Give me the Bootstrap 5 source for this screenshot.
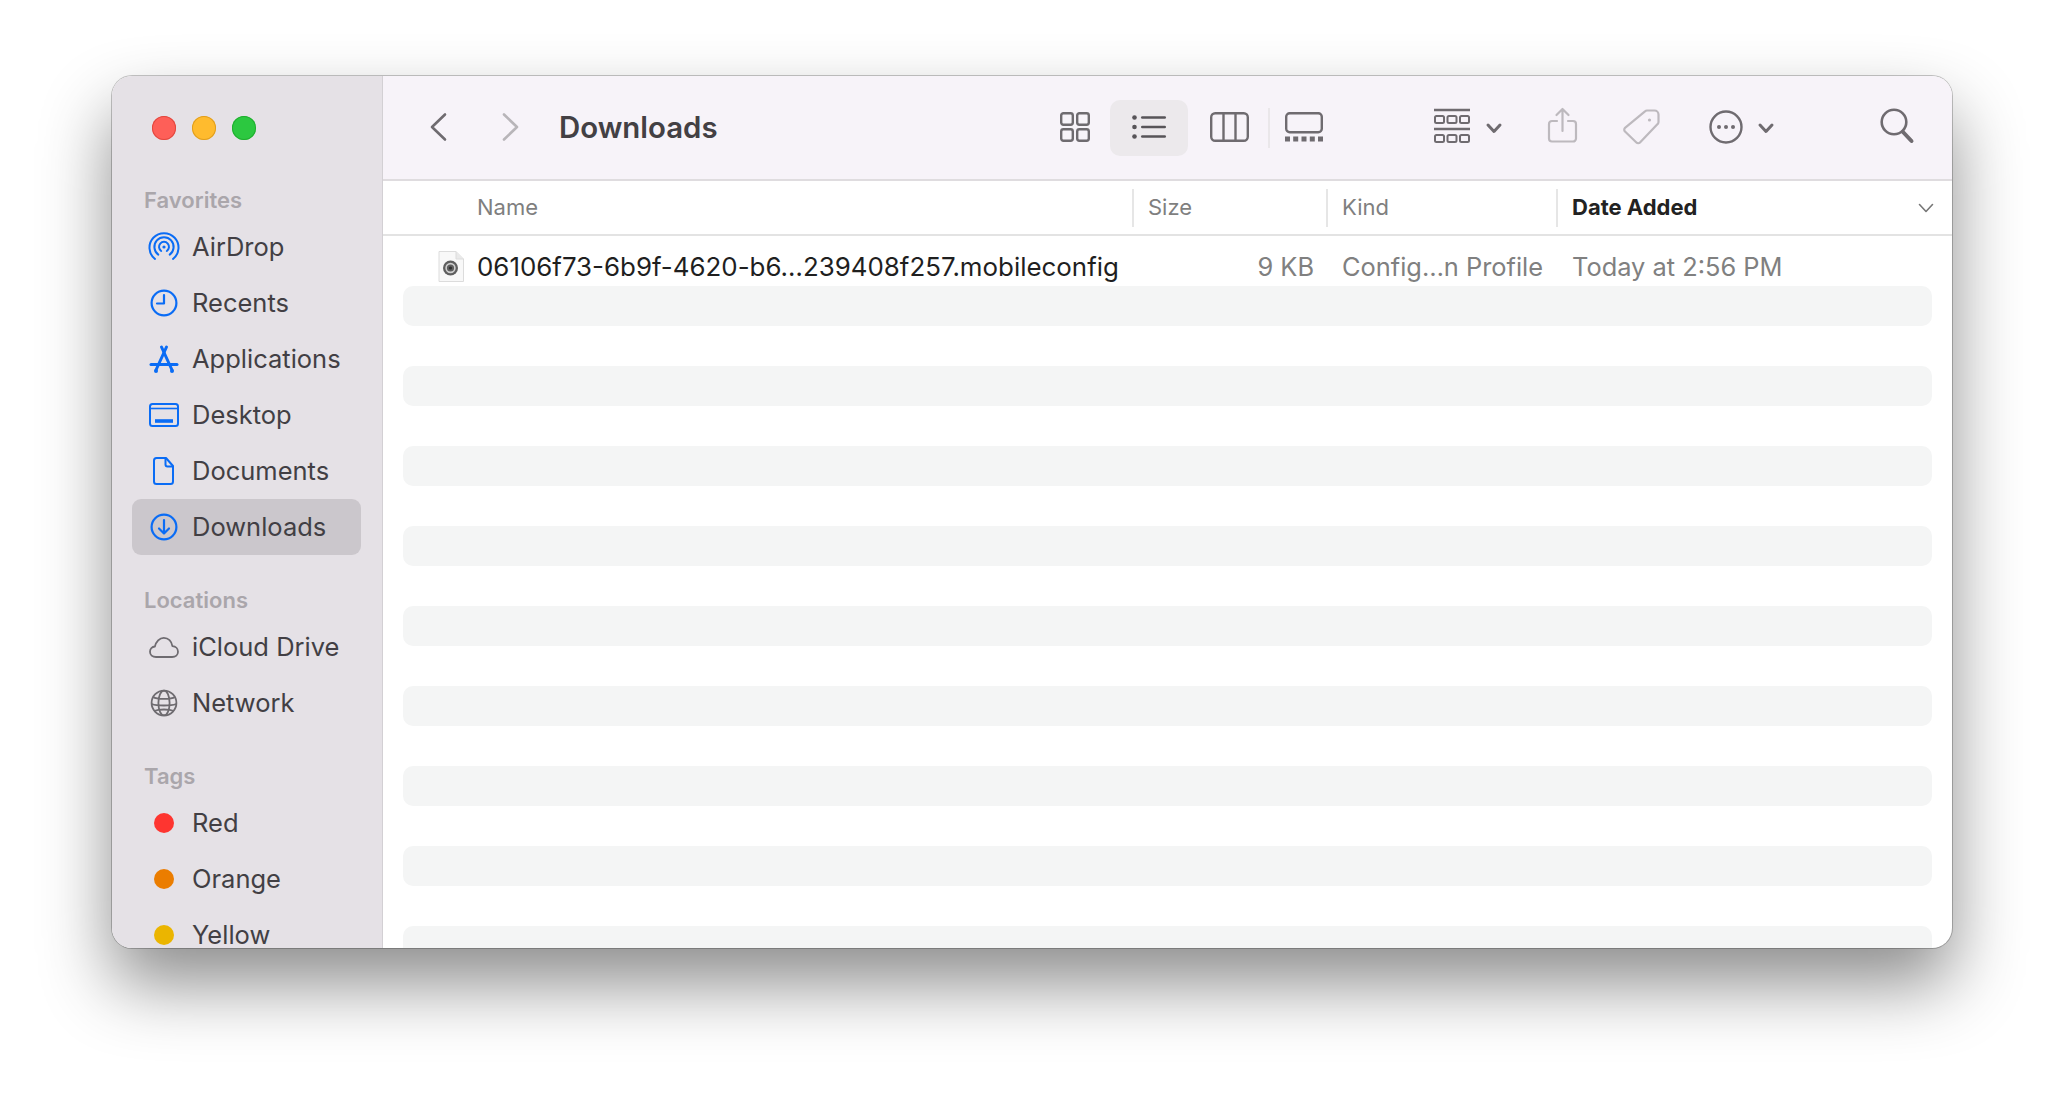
<!doctype html>
<html lang="en">
<head>
<meta charset="utf-8">
<title>Downloads</title>
<link href="https://cdn.jsdelivr.net/npm/bootstrap@5.3.0/dist/css/bootstrap.min.css" rel="stylesheet">
<style>
html,body{height:100%}
body{background:#fff;font-family:Inter,"Liberation Sans",sans-serif;overflow:hidden;padding:76px 112px 148px}
.finder-win{height:872px;border-radius:20px;overflow:hidden;box-shadow:0 0 0 1px rgba(0,0,0,.22),0 36px 70px rgba(0,0,0,.45);background:#fff}
.side-pane{width:271px;flex:none;background:#e5e1e6;border-right:1px solid #d3d0d4;overflow:hidden;color:#423f44}
.lights{padding:40px 0 0 40px;gap:16px;flex:none}
.light{width:24px;height:24px;border-radius:50%}
.l-red{background:#fe5f58;box-shadow:inset 0 0 0 1px #e1483f}
.l-yel{background:#ffbb2e;box-shadow:inset 0 0 0 1px #e09e1f}
.l-grn{background:#2cc840;box-shadow:inset 0 0 0 1px #20ae2f}
.side-head{height:30px;line-height:30px;padding-left:32px;margin:30px 0 4px;font-size:22px;font-weight:600;color:#aaa6ab;flex:none}
.side-head.first{margin-top:45px}
.side-item{height:56px;margin:0 21px 0 20px;padding-left:16px;gap:12px;font-size:25.5px;border-radius:9px;flex:none}
.side-item.sel{background:#cbc7cc}
.side-ico{width:32px;height:32px;flex:none}
.tag-dot{width:20px;height:20px;border-radius:50%;margin:0 6px;flex:none}
.top-bar{height:105px;background:#f7f3f9;border-bottom:2px solid #dfdcdf;flex:none;position:relative}
.tool{position:absolute;overflow:visible;margin-top:-1px}
.title-txt{position:absolute;left:176px;top:0;line-height:103px;font-size:29.4px;font-weight:600;color:#434044}
.sel-pill{position:absolute;left:727px;top:24px;width:78px;height:56px;background:#ece9ec;border-radius:10px}
.head-row,.file-row{display:grid;grid-template-columns:749px 194px 230px 1fr;flex:none}
.head-row{height:55px;border-bottom:2px solid #e3e3e3;font-size:22px;color:#7f7f7f;align-items:center;position:relative}
.head-cell{height:38px;line-height:36px;border-left:2px solid #e6e6e6;padding-left:14px}
.head-cell.name{border-left:0;padding-left:94px}
.head-cell.on{color:#222;font-weight:700}
.file-row{height:40px;margin-top:10px;font-size:25.4px;line-height:42px;color:#808080}
.file-name{color:#1f1f1f;padding-left:94px;position:relative;font-size:25.9px;white-space:nowrap}
.file-size{text-align:right;padding-right:12px}
.file-kind{padding-left:16px}
.file-date{padding-left:16px}
.doc-ico{position:absolute;left:55px;top:5px;width:26px;height:31px}
.sort-ico{position:absolute;right:18px;top:22px;width:16px;height:10px}
.stripes{overflow:hidden;flex:1 1 0;min-height:0;padding:0 20px}
.stripe{height:40px;margin-bottom:40px;background:#f4f5f5;border-radius:10px}
</style>
</head>
<body>
<div class="finder-win d-flex">
  <aside class="side-pane d-flex flex-column">
    <div class="lights d-flex">
      <span class="light l-red"></span><span class="light l-yel"></span><span class="light l-grn"></span>
    </div>
    <div class="side-head first">Favorites</div>
    <div class="side-item d-flex align-items-center">
      <svg class="side-ico" viewBox="0 0 32 32" fill="none" stroke="#0a6cf5" stroke-width="2" stroke-linecap="round"><path d="M7 28A14.5 14.5 0 1 1 25 28"/><path d="M10.3 23.6A9.6 9.6 0 1 1 21.7 23.6"/><path d="M13.2 20A5 5 0 1 1 18.8 20"/><circle cx="16" cy="16" r="1.6" fill="#0a6cf5" stroke="none"/></svg>
      <span>AirDrop</span>
    </div>
    <div class="side-item d-flex align-items-center">
      <svg class="side-ico" viewBox="0 0 32 32" fill="none" stroke="#0a6cf5" stroke-width="2.2" stroke-linecap="round" stroke-linejoin="round"><circle cx="16" cy="16" r="12.4"/><path d="M16 8v8.5H9"/></svg>
      <span>Recents</span>
    </div>
    <div class="side-item d-flex align-items-center">
      <svg class="side-ico" viewBox="0 0 32 32" fill="none" stroke="#0a6cf5" stroke-width="3" stroke-linecap="round"><path d="M13.500 4l10.500 23"/><path d="M18.500 4L8 27"/><path d="M3 21.500h26"/><circle cx="8" cy="28" r="2" fill="#0a6cf5" stroke="none"/><circle cx="24" cy="28" r="2" fill="#0a6cf5" stroke="none"/></svg>
      <span>Applications</span>
    </div>
    <div class="side-item d-flex align-items-center">
      <svg class="side-ico" viewBox="0 0 32 32" fill="none" stroke="#0a6cf5" stroke-width="2"><rect x="2" y="5" width="28" height="22" rx="2.5"/><path d="M2 9.5h28" stroke-width="1.6"/><path d="M7 22h18" stroke-width="3.6"/></svg>
      <span>Desktop</span>
    </div>
    <div class="side-item d-flex align-items-center">
      <svg class="side-ico" viewBox="0 0 32 32" fill="none" stroke="#0a6cf5" stroke-width="2" stroke-linejoin="round"><path d="M8.5 3h9.5l7 8v15.5a2.5 2.5 0 0 1-2.5 2.5h-14A2.5 2.5 0 0 1 6 26.500v-21A2.500 2.500 0 0 1 8.500 3z"/><path d="M17.500 3v6.500a2 2 0 0 0 2 2H25"/></svg>
      <span>Documents</span>
    </div>
    <div class="side-item sel d-flex align-items-center">
      <svg class="side-ico" viewBox="0 0 32 32" fill="none" stroke="#0a6cf5" stroke-width="2.200" stroke-linecap="round" stroke-linejoin="round"><circle cx="16" cy="16" r="12.400"/><path d="M16 9v13.500M11 17.500l5 5 5-5"/></svg>
      <span>Downloads</span>
    </div>
    <div class="side-head">Locations</div>
    <div class="side-item d-flex align-items-center">
      <svg class="side-ico" viewBox="0 0 32 32" fill="none" stroke="#6e6b70" stroke-width="1.800" stroke-linejoin="round"><path d="M8 26c-3.500 0-6-2.300-6-5.300 0-2.800 2.100-5 4.900-5.200C8 11 11.500 6.800 15.800 6.800c4.500 0 7.800 3.500 8.600 8.300 3.300.2 5.600 2.600 5.600 5.600 0 3-2.500 5.300-5.800 5.300z"/></svg>
      <span>iCloud Drive</span>
    </div>
    <div class="side-item d-flex align-items-center">
      <svg class="side-ico" viewBox="0 0 32 32" fill="none" stroke="#6e6b70" stroke-width="1.800"><circle cx="16" cy="16" r="12.400"/><ellipse cx="16" cy="16" rx="5.600" ry="12.400"/><path d="M5 10c4 2.600 18 2.600 22 0M3.800 17c5 2 19 2 24.400 0M6 24c5-2 15-2 20 0"/></svg>
      <span>Network</span>
    </div>
    <div class="side-head">Tags</div>
    <div class="side-item d-flex align-items-center"><span class="tag-dot" style="background:#fe3530"></span><span>Red</span></div>
    <div class="side-item d-flex align-items-center"><span class="tag-dot" style="background:#eb7d00"></span><span>Orange</span></div>
    <div class="side-item d-flex align-items-center"><span class="tag-dot" style="background:#ebb500"></span><span>Yellow</span></div>
  </aside>

  <main class="d-flex flex-column flex-grow-1" style="min-width:0">
    <div class="top-bar">
      <svg class="tool" style="left:47px;top:38px" width="16" height="28" viewBox="0 0 16 28" fill="none" stroke="#6f6b70" stroke-width="2.600" stroke-linecap="round" stroke-linejoin="round"><path d="M15 1.500L2 14l13 12.500"/></svg>
      <svg class="tool" style="left:120px;top:38px" width="16" height="28" viewBox="0 0 16 28" fill="none" stroke="#b8b5b9" stroke-width="2.600" stroke-linecap="round" stroke-linejoin="round"><path d="M1 1.500L14 14 1 26.500"/></svg>
      <span class="title-txt">Downloads</span>
      <svg class="tool" style="left:677px;top:37px" width="30" height="30" viewBox="0 0 30 30" fill="none" stroke="#6f6b70" stroke-width="2.400"><rect x="1.200" y="1.200" width="11.600" height="11.600" rx="2.200"/><rect x="17.200" y="1.200" width="11.600" height="11.600" rx="2.200"/><rect x="1.200" y="17.200" width="11.600" height="11.600" rx="2.200"/><rect x="17.200" y="17.200" width="11.600" height="11.600" rx="2.200"/></svg>
      <span class="sel-pill"></span>
      <svg class="tool" style="left:749px;top:40px" width="34" height="24" viewBox="0 0 34 24" fill="#575458"><circle cx="2.500" cy="2.500" r="2.300"/><circle cx="2.500" cy="12" r="2.300"/><circle cx="2.500" cy="21.500" r="2.300"/><rect x="9" y="1.200" width="25" height="2.600" rx="1.300"/><rect x="9" y="10.700" width="25" height="2.600" rx="1.300"/><rect x="9" y="20.200" width="25" height="2.600" rx="1.300"/></svg>
      <svg class="tool" style="left:827px;top:37px" width="39" height="30" viewBox="0 0 39 30" fill="none" stroke="#6f6b70" stroke-width="2.400"><rect x="1.200" y="1.200" width="36.600" height="27.600" rx="4"/><path d="M13.500 1.200v27.600M25.500 1.200v27.600"/></svg>
      <span class="tool" style="left:885px;top:33px;width:2px;height:40px;background:#eae7ea"></span>
      <svg class="tool" style="left:902px;top:37px" width="38" height="30" viewBox="0 0 38 30" fill="#6f6b70"><rect x="1.200" y="1.200" width="35.600" height="19" rx="3.500" fill="none" stroke="#6f6b70" stroke-width="2.400"/><rect x="0" y="24.500" width="5" height="5"/><rect x="8.200" y="24.500" width="5" height="5"/><rect x="16.500" y="24.500" width="5" height="5"/><rect x="24.800" y="24.500" width="5" height="5"/><rect x="33" y="24.500" width="5" height="5"/></svg>
      <svg class="tool" style="left:1051px;top:34px" width="36" height="34" viewBox="0 0 36 34" fill="none" stroke="#6f6b70" stroke-width="2"><path d="M0 1h36" stroke-width="2.400"/><rect x="1" y="7" width="9" height="7" rx="1.500"/><rect x="13.500" y="7" width="9" height="7" rx="1.500"/><rect x="26" y="7" width="9" height="7" rx="1.500"/><path d="M0 20h36" stroke-width="2.400"/><rect x="1" y="26" width="9" height="7" rx="1.500"/><rect x="13.500" y="26" width="9" height="7" rx="1.500"/><rect x="26" y="26" width="9" height="7" rx="1.500"/></svg>
      <svg class="tool" style="left:1103px;top:48px" width="16" height="11" viewBox="0 0 16 11" fill="none" stroke="#6f6b70" stroke-width="3" stroke-linecap="round" stroke-linejoin="round"><path d="M2 2l6 6.500L14 2"/></svg>
      <svg class="tool" style="left:1165px;top:32px" width="29" height="36" viewBox="0 0 29 36" fill="none" stroke="#bdb9be" stroke-width="2.200" stroke-linecap="round" stroke-linejoin="round"><path d="M9 14H4a3 3 0 0 0-3 3v14.500a3 3 0 0 0 3 3h21a3 3 0 0 0 3-3V17a3 3 0 0 0-3-3h-5"/><path d="M14.500 24V2M8.500 8l6-6 6 6"/></svg>
      <svg class="tool" style="left:1240px;top:34px" width="37" height="37" viewBox="0 0 37 37" fill="none" stroke="#bdb9be" stroke-width="2.200" stroke-linejoin="round"><path d="M24 1.500h7.500a4 4 0 0 1 4 4V13a3 3 0 0 1-.9 2.100L17 33.500a2.500 2.500 0 0 1-3.600 0L2 22.500a2.500 2.500 0 0 1 0-3.600L22 2.300A3 3 0 0 1 24 1.500z"/><circle cx="26.500" cy="11" r="1.600" fill="#bdb9be" stroke="none"/></svg>
      <svg class="tool" style="left:1326px;top:35px" width="34" height="34" viewBox="0 0 34 34" fill="none" stroke="#6f6b70" stroke-width="2.400"><circle cx="17" cy="17" r="15.500"/><g fill="#6f6b70" stroke="none"><circle cx="10" cy="17" r="2"/><circle cx="17" cy="17" r="2"/><circle cx="24" cy="17" r="2"/></g></svg>
      <svg class="tool" style="left:1375px;top:48px" width="16" height="11" viewBox="0 0 16 11" fill="none" stroke="#6f6b70" stroke-width="3" stroke-linecap="round" stroke-linejoin="round"><path d="M2 2l6 6.500L14 2"/></svg>
      <svg class="tool" style="left:1497px;top:33px" width="34" height="36" viewBox="0 0 34 36" fill="none" stroke="#6f6b70" stroke-linecap="round"><circle cx="14" cy="14" r="12.300" stroke-width="2.600"/><path d="M23 24l8.500 9" stroke-width="4"/></svg>
    </div>
    <div class="head-row">
      <div class="head-cell name">Name</div>
      <div class="head-cell">Size</div>
      <div class="head-cell">Kind</div>
      <div class="head-cell on">Date Added</div>
      <svg class="sort-ico" viewBox="0 0 16 10" fill="none" stroke="#777" stroke-width="1.600" stroke-linecap="round" stroke-linejoin="round"><path d="M1.500 1.500L8 8.500l6.500-7"/></svg>
    </div>
    <div class="file-row">
      <div class="file-name">
        <svg class="doc-ico" viewBox="0 0 26 31"><path d="M1 .5h17l7.500 7.500v22.500H1z" fill="#f8f8f8" stroke="#dcdcdc"/><path d="M18 .5V8h7.500" fill="#e9e9e9" stroke="#dcdcdc"/><circle cx="12.500" cy="17" r="7.500" fill="#5f5f5f"/><circle cx="12.500" cy="17" r="4.400" fill="none" stroke="#cfcfcf" stroke-width="1.600"/><circle cx="12.500" cy="17" r="1.600" fill="#2f2f2f"/></svg>
        06106f73-6b9f-4620-b6…239408f257.mobileconfig
      </div>
      <div class="file-size">9 KB</div>
      <div class="file-kind">Config…n Profile</div>
      <div class="file-date">Today at 2:56 PM</div>
    </div>
    <div class="stripes">
      <div class="stripe"></div><div class="stripe"></div><div class="stripe"></div><div class="stripe"></div><div class="stripe"></div><div class="stripe"></div><div class="stripe"></div><div class="stripe"></div><div class="stripe"></div>
    </div>
  </main>
</div>
<script src="https://cdn.jsdelivr.net/npm/bootstrap@5.3.0/dist/js/bootstrap.bundle.min.js"></script>
</body>
</html>
